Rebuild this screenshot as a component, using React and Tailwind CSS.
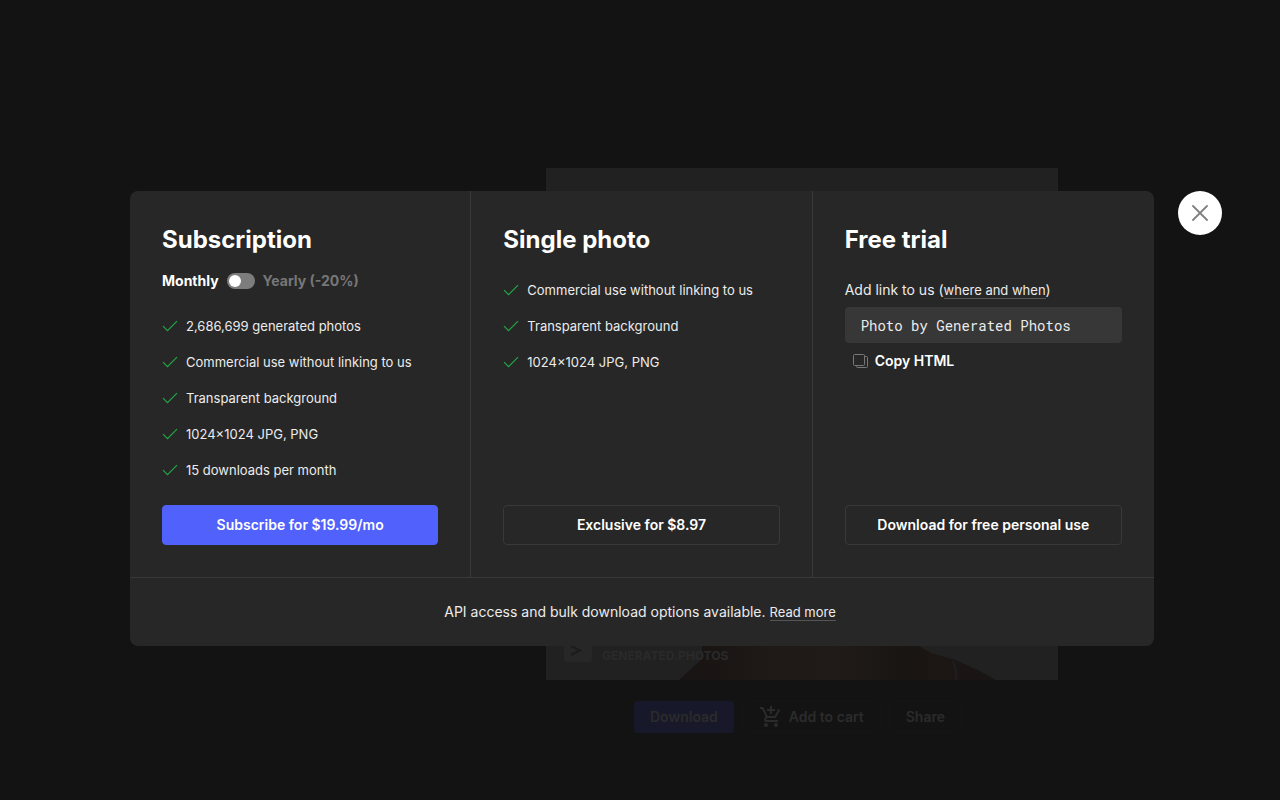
import { useState } from 'react'
import { MdOutlineAddShoppingCart } from 'react-icons/md'

const SUBSCRIPTION_FEATURES = [
  '2,686,699 generated photos',
  'Commercial use without linking to us',
  'Transparent background',
  '1024×1024 JPG, PNG',
  '15 downloads per month',
]

const SINGLE_FEATURES = [
  'Commercial use without linking to us',
  'Transparent background',
  '1024×1024 JPG, PNG',
]

const CheckIcon = () => (
  <svg width="16" height="16" viewBox="0 0 16 16" fill="none" stroke="#23a746" strokeWidth="1.200" className="shrink-0" aria-hidden="true">
    <path d="M1 8.2 5.500 12.700 15 3.2" />
  </svg>
)

const CopyIcon = () => (
  <svg width="16" height="16" viewBox="0 0 16 16" fill="none" stroke="#777777" aria-hidden="true">
    <rect x="0.5" y="1.5" width="11" height="11" rx="1" />
    <path d="M11.500 3.5h2a1 1 0 0 1 1 1v9a1 1 0 0 1-1 1h-9a1 1 0 0 1-1-1v-1" />
  </svg>
)

const FeatureList = ({ items }) => (
  <ul>
    {items.map((item) => (
      <li key={item} className="flex h-9 items-center gap-2 text-[13px] leading-5 text-[#ececec]">
        <CheckIcon />
        {item}
      </li>
    ))}
  </ul>
)

const Plan = ({ title, children, action, primary, last }) => (
  <section className={`flex flex-col px-8 pt-[33px] pb-8 ${last ? '' : 'border-r border-[#393939]'}`}>
    <h2 className="mb-4 text-2xl leading-8 font-bold text-white">{title}</h2>
    {children}
    <button
      type="button"
      className={`mt-auto h-10 rounded border text-sm font-semibold text-white ${
        primary ? 'border-[#5061fc] bg-[#5061fc]' : 'border-[#393939]'
      }`}
    >
      {action}
    </button>
  </section>
)

const PhotoPage = () => (
  <main className="flex flex-col items-center pt-[168px] pb-16 pl-[324px]">
    <div className="relative size-[512px] overflow-hidden bg-[#212121]">
      <svg viewBox="0 0 512 512" className="size-full" role="img" aria-label="Generated portrait">
        <defs>
          <linearGradient id="skin" x1="0" x2="1" y1="0" y2="0">
            <stop offset="0" stopColor="#181413" />
            <stop offset="0.14" stopColor="#1b1614" />
            <stop offset="0.3" stopColor="#1f1a17" />
            <stop offset="0.5" stopColor="#201b18" />
            <stop offset="0.72" stopColor="#191513" />
            <stop offset="0.82" stopColor="#1c1614" />
            <stop offset="1" stopColor="#191515" />
          </linearGradient>
        </defs>
        <path d="M133 512 156 491V470H365L373 478 385 485 410 492 432 502 450 512Z" fill="url(#skin)" />
        <path d="M407 493Q411 502 410 512" fill="none" stroke="#1e1c1c" strokeWidth="3" />
      </svg>
      <div className="absolute bottom-[18px] left-[18px] flex items-end gap-2.5">
        <svg width="28" height="28" viewBox="0 0 28 28" aria-hidden="true">
          <rect width="28" height="28" rx="4" fill="#272727" />
          <path d="M7 12l9 4.500-9 4.500" fill="none" stroke="#1c1c1c" strokeWidth="2" />
        </svg>
        <span className="text-xs leading-3 font-bold text-[#2a2a2a]">GENERATED.PHOTOS</span>
      </div>
    </div>
    <div className="mt-[21px] flex gap-2 pr-2 text-sm font-semibold text-[#2b2b2b]">
      <button type="button" className="h-8 rounded bg-[#171829] px-4">Download</button>
      <button type="button" className="flex h-8 items-center gap-1.5 rounded border border-[#151515] px-4">
        <MdOutlineAddShoppingCart size={24} />
        Add to cart
      </button>
      <button type="button" className="h-8 rounded border border-[#151515] px-4">Share</button>
    </div>
  </main>
)

const PricingDialog = () => {
  const [yearly, setYearly] = useState(false)

  return (
    <div className="absolute inset-0 flex items-start justify-center pt-[191px] pr-[126px] pl-[130px]">
      <div role="dialog" aria-label="Pricing" className="relative w-full max-w-5xl">
        <div className="rounded-lg bg-[#272727]">
          <div className="grid grid-cols-3 border-b border-[#393939]">
            <Plan title="Subscription" action="Subscribe for $19.99/mo" primary>
              <div className="mb-[18px] flex h-[18px] items-center gap-2 text-sm font-bold">
                <label htmlFor="billing" className={yearly ? 'text-[#777777]' : 'text-white'}>Monthly</label>
                <input
                  id="billing"
                  type="checkbox"
                  role="switch"
                  checked={yearly}
                  onChange={(e) => setYearly(e.target.checked)}
                  className="h-4 w-7 appearance-none rounded-full bg-[#7d7d7d] p-0.5 before:block before:size-3 before:rounded-full before:bg-white checked:before:ml-3"
                />
                <label htmlFor="billing" className={yearly ? 'text-white' : 'text-[#777777]'}>Yearly (-20%)</label>
              </div>
              <FeatureList items={SUBSCRIPTION_FEATURES} />
              <div className="h-[17px]" />
            </Plan>
            <Plan title="Single photo" action="Exclusive for $8.97">
              <FeatureList items={SINGLE_FEATURES} />
            </Plan>
            <Plan title="Free trial" action="Download for free personal use" last>
              <p className="h-[35px] text-sm leading-9 text-[#ececec]">
                Add link to us (<a href="#where" className="border-b border-[#555555] text-[13px]">where and when</a>)
              </p>
              <input
                readOnly
                aria-label="Attribution"
                value="Photo by Generated Photos"
                className="h-9 w-full rounded bg-[#373737] px-4 font-['Roboto_Mono','DejaVu_Sans_Mono',monospace] text-sm text-[#ececec]"
              />
              <button type="button" className="flex h-9 items-center gap-1.5 self-start px-2 text-sm font-semibold text-white">
                <CopyIcon />
                Copy HTML
              </button>
            </Plan>
          </div>
          <p className="py-6 pr-1 text-center text-sm text-[#ececec]">
            API access and bulk download options available.{' '}
            <a href="#api" className="border-b border-[#555555] text-[13px]">Read more</a>
          </p>
        </div>
        <button
          type="button"
          aria-label="Close"
          className="absolute top-0 left-full ml-6 flex size-11 items-center justify-center rounded-full bg-white"
        >
          <svg width="16" height="16" viewBox="0 0 16 16" stroke="#808080" strokeWidth="1.800" strokeLinecap="round" aria-hidden="true">
            <path d="M1 1 15 15M15 1 1 15" />
          </svg>
        </button>
      </div>
    </div>
  )
}

const App = () => (
  <div className="relative min-h-screen bg-[#131313] font-['Inter',sans-serif]">
    <PhotoPage />
    <PricingDialog />
  </div>
)

export default App
